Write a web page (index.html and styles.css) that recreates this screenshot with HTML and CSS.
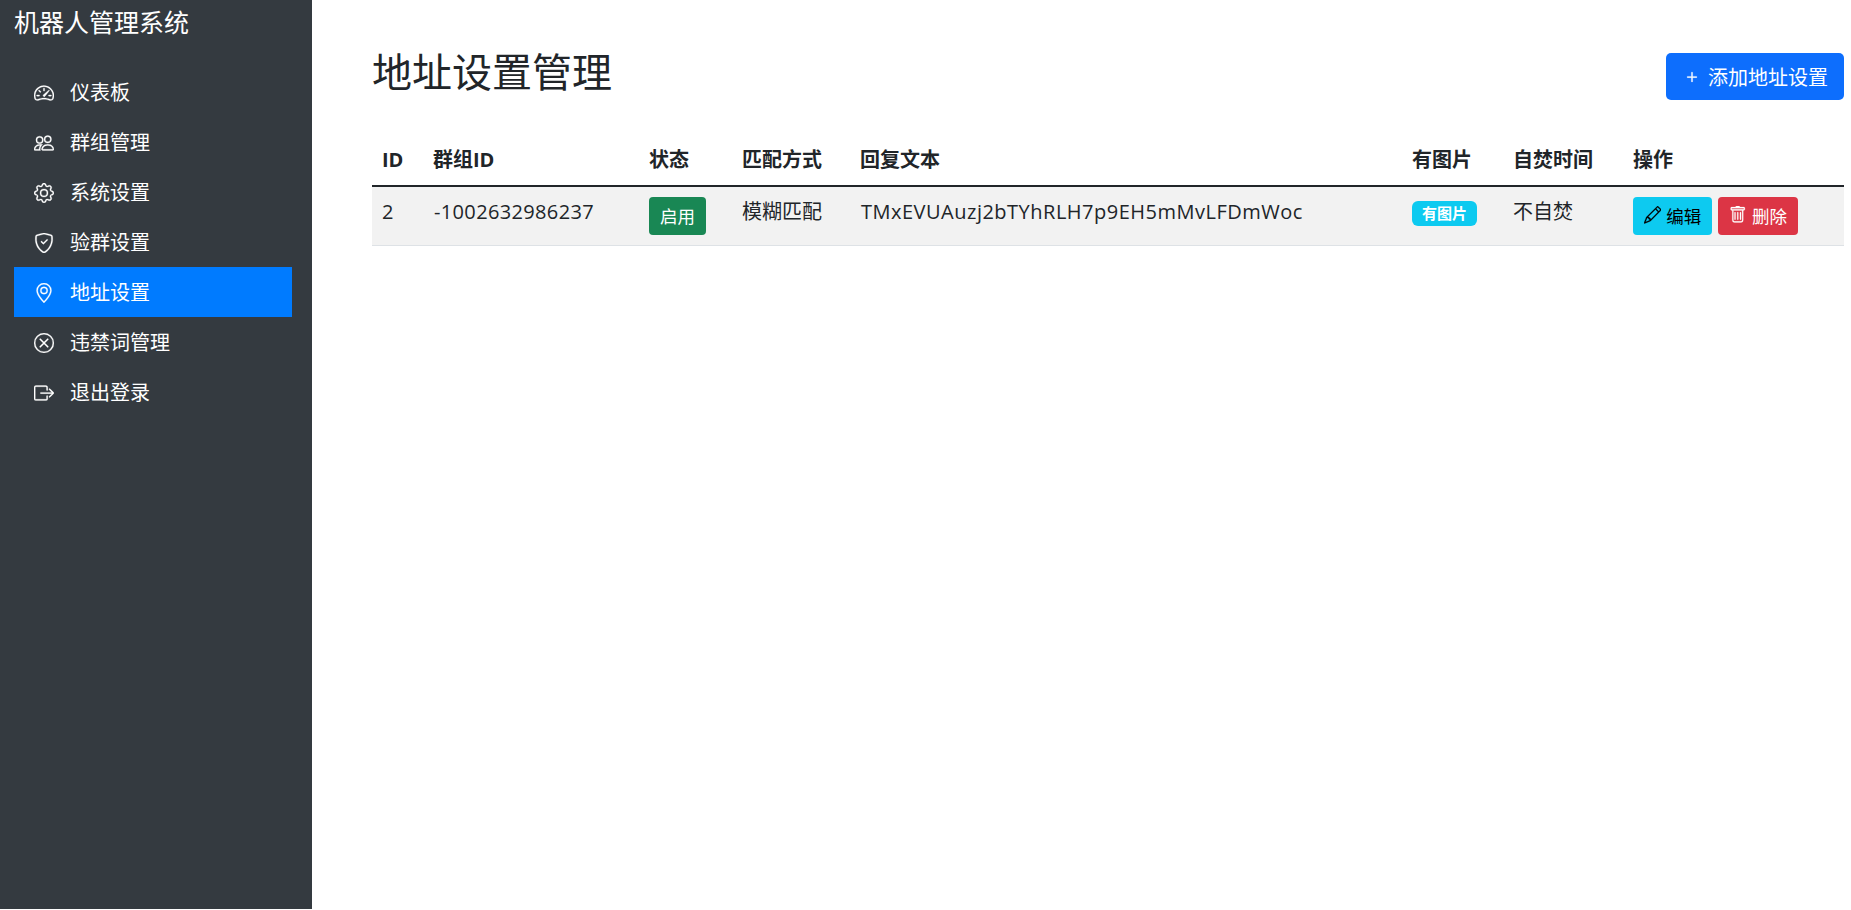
FILE: index.html
```html
<!DOCTYPE html>
<html lang="zh-CN">
<head>
<meta charset="utf-8">
<title>地址设置管理</title>
<link rel="stylesheet" href="styles.css">
</head>
<body>
<div class="layout">
  <aside class="sidebar">
    <div class="brand">机器人管理系统</div>
    <nav class="nav">
      <a class="nav-link" href="#"><svg class="icon" viewBox="0 0 16 16"><path d="M8 4a.5.5 0 0 1 .5.5V6a.5.5 0 0 1-1 0V4.5A.5.5 0 0 1 8 4zM3.732 5.732a.5.5 0 0 1 .707 0l.915.914a.5.5 0 1 1-.708.708l-.914-.915a.5.5 0 0 1 0-.707zM2 10a.5.5 0 0 1 .5-.5h1.586a.5.5 0 0 1 0 1H2.5A.5.5 0 0 1 2 10zm9.5 0a.5.5 0 0 1 .5-.5h1.5a.5.5 0 0 1 0 1H12a.5.5 0 0 1-.5-.5zm.754-4.246a.389.389 0 0 0-.527-.02L7.547 9.31a.91.91 0 1 0 1.302 1.258l3.434-4.297a.389.389 0 0 0-.029-.518z"/><path fill-rule="evenodd" d="M0 10a8 8 0 1 1 15.547 2.661c-.442 1.253-1.845 1.602-2.932 1.25C11.309 13.488 9.475 13 8 13c-1.474 0-3.31.488-4.615.911-1.087.352-2.49.003-2.932-1.25A7.988 7.988 0 0 1 0 10zm8-7a7 7 0 0 0-6.603 9.329c.203.575.923.876 1.68.63C4.397 12.533 6.358 12 8 12s3.604.532 4.923.96c.757.245 1.477-.056 1.68-.631A7 7 0 0 0 8 3z"/></svg><span>仪表板</span></a>
      <a class="nav-link" href="#"><svg class="icon" viewBox="0 0 16 16"><path d="M15 14s1 0 1-1-1-4-5-4-5 3-5 4 1 1 1 1h8Zm-7.978-1A.261.261 0 0 1 7 12.996c.001-.264.167-1.03.76-1.72C8.312 10.629 9.282 10 11 10c1.717 0 2.687.63 3.24 1.276.593.69.758 1.457.76 1.72l-.008.002a.274.274 0 0 1-.014.002H7.022ZM11 7a2 2 0 1 0 0-4 2 2 0 0 0 0 4Zm3-2a3 3 0 1 1-6 0 3 3 0 0 1 6 0ZM6.936 9.28a5.88 5.88 0 0 0-1.23-.247A7.35 7.35 0 0 0 5 9c-4 0-5 3-5 4 0 .667.333 1 1 1h4.216A2.238 2.238 0 0 1 5 13c0-1.01.377-2.042 1.09-2.904.243-.294.526-.569.846-.816ZM4.92 10A5.493 5.493 0 0 0 4 13H1c0-.26.164-1.03.76-1.724.545-.636 1.492-1.256 3.16-1.275ZM1.5 5.5a3 3 0 1 1 6 0 3 3 0 0 1-6 0Zm3-2a2 2 0 1 0 0 4 2 2 0 0 0 0-4Z"/></svg><span>群组管理</span></a>
      <a class="nav-link" href="#"><svg class="icon" viewBox="0 0 16 16"><path d="M8 4.754a3.246 3.246 0 1 0 0 6.492 3.246 3.246 0 0 0 0-6.492zM5.754 8a2.246 2.246 0 1 1 4.492 0 2.246 2.246 0 0 1-4.492 0z"/><path d="M9.796 1.343c-.527-1.79-3.065-1.79-3.592 0l-.094.319a.873.873 0 0 1-1.255.52l-.292-.16c-1.64-.892-3.433.902-2.54 2.541l.159.292a.873.873 0 0 1-.52 1.255l-.319.094c-1.79.527-1.79 3.065 0 3.592l.319.094a.873.873 0 0 1 .52 1.255l-.16.292c-.892 1.64.901 3.434 2.541 2.54l.292-.159a.873.873 0 0 1 1.255.52l.094.319c.527 1.79 3.065 1.79 3.592 0l.094-.319a.873.873 0 0 1 1.255-.52l.292.16c1.64.893 3.434-.902 2.54-2.541l-.159-.292a.873.873 0 0 1 .52-1.255l.319-.094c1.79-.527 1.79-3.065 0-3.592l-.319-.094a.873.873 0 0 1-.52-1.255l.16-.292c.893-1.64-.902-3.433-2.541-2.54l-.292.159a.873.873 0 0 1-1.255-.52l-.094-.319zm-2.633.283c.246-.835 1.428-.835 1.674 0l.094.319a1.873 1.873 0 0 0 2.693 1.115l.291-.16c.764-.415 1.6.42 1.184 1.185l-.159.292a1.873 1.873 0 0 0 1.116 2.692l.318.094c.835.246.835 1.428 0 1.674l-.319.094a1.873 1.873 0 0 0-1.115 2.693l.16.291c.415.764-.42 1.6-1.185 1.184l-.291-.159a1.873 1.873 0 0 0-2.693 1.116l-.094.318c-.246.835-1.428.835-1.674 0l-.094-.319a1.873 1.873 0 0 0-2.692-1.115l-.292.16c-.764.415-1.6-.42-1.184-1.185l.159-.291A1.873 1.873 0 0 0 1.945 8.93l-.319-.094c-.835-.246-.835-1.428 0-1.674l.319-.094A1.873 1.873 0 0 0 3.06 4.377l-.16-.292c-.415-.764.42-1.6 1.185-1.184l.292.159a1.873 1.873 0 0 0 2.692-1.115l.094-.319z"/></svg><span>系统设置</span></a>
      <a class="nav-link" href="#"><svg class="icon" viewBox="0 0 16 16"><path d="M5.338 1.59a61.44 61.44 0 0 0-2.837.856.481.481 0 0 0-.328.39c-.554 4.157.726 7.19 2.253 9.188a10.725 10.725 0 0 0 2.287 2.233c.346.244.652.42.893.533.12.057.218.095.293.118a.55.55 0 0 0 .101.025.615.615 0 0 0 .1-.025c.076-.023.174-.061.294-.118.24-.113.547-.29.893-.533a10.726 10.726 0 0 0 2.287-2.233c1.527-1.997 2.807-5.031 2.253-9.188a.48.48 0 0 0-.328-.39c-.651-.213-1.75-.56-2.837-.855C9.552 1.29 8.531 1.067 8 1.067c-.53 0-1.552.223-2.662.524zM5.072.56C6.157.265 7.31 0 8 0s1.843.265 2.928.56c1.11.3 2.229.655 2.887.87a1.54 1.54 0 0 1 1.044 1.262c.596 4.477-.787 7.795-2.465 9.99a11.775 11.775 0 0 1-2.517 2.453 7.159 7.159 0 0 1-1.048.625c-.28.132-.581.24-.829.24s-.548-.108-.829-.24a7.158 7.158 0 0 1-1.048-.625 11.777 11.777 0 0 1-2.517-2.453C1.928 10.487.545 7.169 1.141 2.692A1.54 1.54 0 0 1 2.185 1.43 62.456 62.456 0 0 1 5.072.56z"/><path d="M10.854 5.146a.5.5 0 0 1 0 .708l-3 3a.5.5 0 0 1-.708 0l-1.5-1.5a.5.5 0 1 1 .708-.708L7.5 7.793l2.646-2.647a.5.5 0 0 1 .708 0z"/></svg><span>验群设置</span></a>
      <a class="nav-link active" href="#"><svg class="icon" viewBox="0 0 16 16"><path d="M12.166 8.94c-.524 1.062-1.234 2.12-1.96 3.07A31.493 31.493 0 0 1 8 14.58a31.481 31.481 0 0 1-2.206-2.57c-.726-.95-1.436-2.008-1.96-3.07C3.304 7.867 3 6.862 3 6a5 5 0 0 1 10 0c0 .862-.305 1.867-.834 2.94zM8 16s6-5.686 6-10A6 6 0 0 0 2 6c0 4.314 6 10 6 10z"/><path d="M8 8a2 2 0 1 1 0-4 2 2 0 0 1 0 4zm0 1a3 3 0 1 0 0-6 3 3 0 0 0 0 6z"/></svg><span>地址设置</span></a>
      <a class="nav-link" href="#"><svg class="icon" viewBox="0 0 16 16"><path d="M8 15A7 7 0 1 1 8 1a7 7 0 0 1 0 14zm0 1A8 8 0 1 0 8 0a8 8 0 0 0 0 16z"/><path d="M4.646 4.646a.5.5 0 0 1 .708 0L8 7.293l2.646-2.647a.5.5 0 0 1 .708.708L8.707 8l2.647 2.646a.5.5 0 0 1-.708.708L8 8.707l-2.646 2.647a.5.5 0 0 1-.708-.708L7.293 8 4.646 5.354a.5.5 0 0 1 0-.708z"/></svg><span>违禁词管理</span></a>
      <a class="nav-link" href="#"><svg class="icon" viewBox="0 0 16 16"><path fill-rule="evenodd" d="M10 12.5a.5.5 0 0 1-.5.5h-8a.5.5 0 0 1-.5-.5v-9a.5.5 0 0 1 .5-.5h8a.5.5 0 0 1 .5.5v2a.5.5 0 0 0 1 0v-2A1.5 1.5 0 0 0 9.5 2h-8A1.5 1.5 0 0 0 0 3.5v9A1.5 1.5 0 0 0 1.5 14h8a1.5 1.5 0 0 0 1.5-1.5v-2a.5.5 0 0 0-1 0v2z"/><path fill-rule="evenodd" d="M15.854 8.354a.5.5 0 0 0 0-.708l-3-3a.5.5 0 0 0-.708.708L14.293 7.5H5.5a.5.5 0 0 0 0 1h8.793l-2.147 2.146a.5.5 0 0 0 .708.708l3-3z"/></svg><span>退出登录</span></a>
    </nav>
  </aside>
  <main class="main">
    <header class="page-head">
      <h2 class="page-title">地址设置管理</h2>
      <button class="btn btn-add" type="button"><svg class="icon" viewBox="0 0 16 16"><path d="M8 4a.5.5 0 0 1 .5.5v3h3a.5.5 0 0 1 0 1h-3v3a.5.5 0 0 1-1 0v-3h-3a.5.5 0 0 1 0-1h3v-3A.5.5 0 0 1 8 4z"/></svg><span>添加地址设置</span></button>
    </header>
    <table class="table">
      <colgroup>
        <col class="c-id"><col class="c-group"><col class="c-state"><col class="c-match"><col class="c-text"><col class="c-img"><col class="c-burn"><col class="c-act">
      </colgroup>
      <thead>
        <tr><th>ID</th><th>群组ID</th><th>状态</th><th>匹配方式</th><th>回复文本</th><th>有图片</th><th>自焚时间</th><th>操作</th></tr>
      </thead>
      <tbody>
        <tr>
          <td>2</td>
          <td class="group-id">-1002632986237</td>
          <td><button class="btn btn-sm btn-success" type="button">启用</button></td>
          <td>模糊匹配</td>
          <td class="reply">TMxEVUAuzj2bTYhRLH7p9EH5mMvLFDmWoc</td>
          <td><span class="badge">有图片</span></td>
          <td>不自焚</td>
          <td class="actions">
            <button class="btn btn-sm btn-info" type="button"><svg class="icon" viewBox="0 0 16 16"><path d="M12.146.146a.5.5 0 0 1 .708 0l3 3a.5.5 0 0 1 0 .708l-10 10a.5.5 0 0 1-.168.11l-5 2a.5.5 0 0 1-.65-.65l2-5a.5.5 0 0 1 .11-.168l10-10zM11.207 2.5 13.5 4.793 14.793 3.5 12.5 1.207 11.207 2.5zm1.586 3L10.5 3.207 4 9.707V10h.5a.5.5 0 0 1 .5.5v.5h.5a.5.5 0 0 1 .5.5v.5h.293l6.5-6.5zm-9.761 5.175-.106.106-1.528 3.821 3.821-1.528.106-.106A.5.5 0 0 1 5 12.5V12h-.5a.5.5 0 0 1-.5-.5V11h-.5a.5.5 0 0 1-.468-.325z"/></svg>编辑</button>
            <button class="btn btn-sm btn-danger" type="button"><svg class="icon" viewBox="0 0 16 16"><path d="M5.5 5.5A.5.5 0 0 1 6 6v6a.5.5 0 0 1-1 0V6a.5.5 0 0 1 .5-.5zm2.5 0a.5.5 0 0 1 .5.5v6a.5.5 0 0 1-1 0V6a.5.5 0 0 1 .5-.5zm3 .5a.5.5 0 0 0-1 0v6a.5.5 0 0 0 1 0V6z"/><path fill-rule="evenodd" d="M14.5 3a1 1 0 0 1-1 1H13v9a2 2 0 0 1-2 2H5a2 2 0 0 1-2-2V4h-.5a1 1 0 0 1-1-1V2a1 1 0 0 1 1-1H6a1 1 0 0 1 1-1h2a1 1 0 0 1 1 1h3.5a1 1 0 0 1 1 1v1zM4.118 4 4 4.059V13a1 1 0 0 0 1 1h6a1 1 0 0 0 1-1V4.059L11.882 4H4.118zM2.5 3V2h11v1h-11z"/></svg>删除</button>
          </td>
        </tr>
      </tbody>
    </table>
  </main>
</div>
</body>
</html>
```

FILE: styles.css
```css
* { box-sizing: border-box; }

html, body { height: 100%; }

body {
  margin: 0;
  background: #fff;
  color: #212529;
  font-family: "Open Sans", "Noto Sans CJK SC", sans-serif;
  font-size: 20px;
  line-height: 1.5;
  overflow: hidden;
}

.layout {
  display: flex;
  height: 909px;
}

.icon {
  display: block;
  flex: none;
  width: 20px;
  height: 20px;
  fill: currentColor;
  stroke: currentColor;
  stroke-width: .22;
}

/* Sidebar */
.sidebar {
  flex: 0 0 312px;
  padding: 0 20px 0 14px;
  background: #343a40;
  color: #fff;
}

.brand {
  height: 67px;
  font-size: 25px;
  line-height: 44px;
  font-weight: 400;
}

.nav { display: flex; flex-direction: column; }

.nav-link {
  display: flex;
  align-items: center;
  gap: 16px;
  height: 50px;
  padding: 2px 0 0 20px;
  color: #fff;
  text-decoration: none;
}

.nav-link.active { background: #007bff; }

/* Main */
.main {
  flex: 1;
  min-width: 0;
  padding: 47px 7px 0 60px;
}

.page-head {
  display: flex;
  justify-content: space-between;
  align-items: center;
  height: 58px;
  margin-bottom: 30px;
}

.page-title {
  margin: 1px 0 9px;
  font-size: 40px;
  line-height: 48px;
  font-weight: 400;
}

/* Buttons */
.btn {
  display: inline-flex;
  align-items: center;
  justify-content: center;
  border: 0;
  border-radius: 5px;
  padding: 0;
  font-family: inherit;
  color: #fff;
}

.btn-add {
  width: 178px;
  height: 47px;
  margin-top: 1px;
  gap: 6px;
  background: #0d6efd;
  font-size: 20px;
}

.btn-sm {
  height: 38px;
  padding-bottom: 2px;
  border-radius: 4px;
  font-size: 17.5px;
  vertical-align: top;
}

.btn-sm .icon {
  width: 17.5px;
  height: 17.5px;
  margin-right: 5px;
}

.btn-success { width: 57px; background: #198754; }
.btn-info { width: 79px; background: #0dcaf0; color: #000; }
.btn-danger { width: 80px; background: #dc3545; margin-left: 1px; }

.badge {
  display: inline-block;
  width: 65px;
  height: 25px;
  border-radius: 6px;
  background: #0dcaf0;
  color: #fff;
  font-size: 15px;
  font-weight: 700;
  line-height: 25px;
  text-align: center;
  vertical-align: top;
  margin-top: 4px;
}

/* Table */
.table {
  width: 100%;
  table-layout: fixed;
  border-collapse: collapse;
}

.c-id { width: 51px; }
.c-group { width: 216px; }
.c-state { width: 93px; }
.c-match { width: 118px; }
.c-text { width: 552px; }
.c-img { width: 101px; }
.c-burn { width: 120px; }

.table th,
.table td {
  padding: 10px;
  text-align: left;
  vertical-align: top;
  white-space: nowrap;
}

.table th {
  font-weight: 700;
  border-bottom: 2px solid #212529;
}

.table td {
  height: 58px;
  background: #f2f2f2;
  border-bottom: 1px solid #dee2e6;
}

.table td.group-id {
  padding-left: 11px;
  letter-spacing: .35px;
}

.table td.reply {
  padding-left: 11px;
  letter-spacing: .5px;
}

.actions { white-space: nowrap; }
```
